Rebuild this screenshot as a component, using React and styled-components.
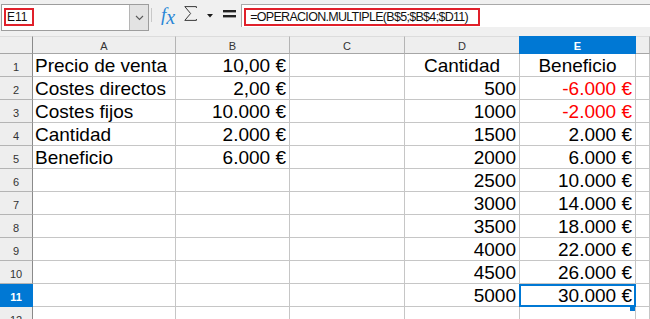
import React from "react";
import styled, { createGlobalStyle } from "styled-components";

const Global = createGlobalStyle`
  html, body { margin: 0; padding: 0; background: #ffffff; }
  body { width: 650px; height: 319px; overflow: hidden; font-family: "Liberation Sans", Arial, sans-serif; }
`;

const Window = styled.div`
  width: 650px;
  height: 319px;
  overflow: hidden;
  display: flex;
  flex-direction: column;
  background: #ffffff;
`;

const Toolbar = styled.div`
  height: 36px;
  flex: none;
  display: flex;
  align-items: flex-start;
  padding-top: 4px;
  box-sizing: border-box;
  background: #f0f0f0;
`;

const NameBox = styled.div`
  margin-left: 1px;
  width: 148px;
  height: 27px;
  box-sizing: border-box;
  border: 1px solid #9d9d9d;
  background: #ffffff;
  display: flex;
`;

const NameField = styled.div`
  flex: 1;
  padding: 2px 0 0 2px;
`;

const Highlight = styled.span`
  display: inline-block;
  height: 18px;
  box-sizing: border-box;
  border: 2px solid #e0202a;
  padding: ${(p) => p.$pad};
  font-family: "Liberation Sans", Arial, sans-serif;
  font-size: ${(p) => p.$size || "12px"};
  line-height: 14px;
  letter-spacing: ${(p) => p.$ls || "0"};
  color: #111111;
  white-space: nowrap;
`;

const DropButton = styled.div`
  width: 18px;
  background: #e3e3e3;
  border-left: 1px solid #b5b5b5;
  display: flex;
  align-items: center;
  justify-content: center;
`;

const Separator = styled.div`
  width: 1px;
  height: 14px;
  margin: 4px 0 0 2px;
  background: #c8c8c8;
`;

const Fx = styled.div`
  margin: 0 0 0 9px;
  height: 24px;
  font-family: "Liberation Serif", "Times New Roman", serif;
  font-style: italic;
  font-size: 19px;
  line-height: 20px;
  color: #2a86d6;
  white-space: nowrap;
`;

const FxSub = styled.span`
  font-size: 20px;
  position: relative;
  top: 3px;
`;

const IconSlot = styled.div`
  margin: ${(p) => p.$top}px 0 0 ${(p) => p.$left}px;
  display: flex;
`;

const FormulaField = styled.div`
  margin-left: 5px;
  flex: 1;
  height: 23px;
  box-sizing: border-box;
  border-top: 1px solid #a9a9a9;
  border-left: 1px solid #a9a9a9;
  background: #ffffff;
  padding: 2px 0 0 2px;
`;

const Sheet = styled.div`
  flex: 1;
  overflow: hidden;
  display: grid;
  grid-template-columns: 33px 143px 114px 115px 115px 116px 1fr;
  grid-template-rows: 18px repeat(12, 23px);
`;

const Corner = styled.div`
  background: #eeeeee;
  border-right: 1px solid #8a8a8a;
  border-bottom: 1px solid #a6a6a6;
  border-top: 1px solid #dcdcdc;
  box-sizing: border-box;
`;

const ColHead = styled.div`
  box-sizing: border-box;
  border-top: 1px solid ${(p) => (p.$active ? "#0078d4" : "#dcdcdc")};
  border-right: 1px solid ${(p) => (p.$active ? "#0078d4" : "#b4b4b4")};
  border-bottom: 1px solid ${(p) => (p.$active ? "#0078d4" : "#a6a6a6")};
  box-shadow: ${(p) => (p.$active ? "-1px 0 0 #0078d4" : "none")};
  background: ${(p) => (p.$active ? "#0078d4" : "#eeeeee")};
  color: ${(p) => (p.$active ? "#ffffff" : "#333333")};
  font-weight: ${(p) => (p.$active ? 700 : 400)};
  font-family: "Liberation Sans", Arial, sans-serif;
  font-size: 11px;
  line-height: 16px;
  padding-top: 1px;
  text-align: center;
`;

const RowHead = styled.div`
  box-sizing: border-box;
  border-right: 1px solid ${(p) => (p.$active ? "#0078d4" : "#8a8a8a")};
  border-bottom: 1px solid ${(p) => (p.$active ? "#0078d4" : "#b4b4b4")};
  background: ${(p) => (p.$active ? "#0078d4" : "#eeeeee")};
  color: ${(p) => (p.$active ? "#ffffff" : "#333333")};
  font-weight: ${(p) => (p.$active ? 700 : 400)};
  font-family: "Liberation Sans", Arial, sans-serif;
  font-size: 11px;
  line-height: 22px;
  padding-top: 2px;
  text-align: center;
`;

const Cell = styled.div`
  position: relative;
  box-sizing: border-box;
  border-right: 1px solid #c6c6c6;
  border-bottom: 1px solid #c6c6c6;
  padding: 1px ${(p) => (p.$align === "right" ? "3px" : "2px")} 0 2px;
  font-family: "Liberation Sans", Arial, sans-serif;
  font-size: 19px;
  line-height: 22px;
  white-space: nowrap;
  text-align: ${(p) => p.$align || "left"};
  color: ${(p) => (p.$red ? "#ff0000" : "#000000")};
`;

const Cursor = styled.div`
  position: absolute;
  left: -1px;
  right: -1px;
  top: 0;
  bottom: -1px;
  border: 2px solid #0078d4;
  pointer-events: none;
`;

const Handle = styled.div`
  position: absolute;
  right: -2px;
  bottom: -6px;
  width: 6px;
  height: 6px;
  background: #0078d4;
`;

const cols = ["A", "B", "C", "D", "E", ""];

const rows = [
  ["Precio de venta", "10,00 €", "", { t: "Cantidad", a: "center" }, { t: "Beneficio", a: "center" }],
  ["Costes directos", "2,00 €", "", "500", { t: "-6.000 €", red: true }],
  ["Costes fijos", "10.000 €", "", "1000", { t: "-2.000 €", red: true }],
  ["Cantidad", "2.000 €", "", "1500", "2.000 €"],
  ["Beneficio", "6.000 €", "", "2000", "6.000 €"],
  ["", "", "", "2500", "10.000 €"],
  ["", "", "", "3000", "14.000 €"],
  ["", "", "", "3500", "18.000 €"],
  ["", "", "", "4000", "22.000 €"],
  ["", "", "", "4500", "26.000 €"],
  ["", "", "", "5000", "30.000 €"],
  ["", "", "", "", ""],
];

function cellProps(v, colIndex) {
  if (v && typeof v === "object") return { text: v.t, align: v.a || "right", red: v.red };
  return { text: v, align: colIndex === 0 ? "left" : "right", red: false };
}

export default function App() {
  return (
    <>
      <Global />
      <Window>
        <Toolbar>
          <NameBox>
            <NameField>
              <Highlight $pad="0 5px 0 1px">E11</Highlight>
            </NameField>
            <DropButton>
              <svg width="9" height="6" viewBox="0 0 9 6">
                <path d="M1 1 L4.5 4.5 L8 1" fill="none" stroke="#5a5a5a" strokeWidth="1.1" />
              </svg>
            </DropButton>
          </NameBox>
          <Separator />
          <Fx>
            f<FxSub>x</FxSub>
          </Fx>
          <IconSlot $top={2} $left={9}>
            <svg width="13" height="15" viewBox="0 0 13 15">
              <path d="M12.4 2 V0.6 H0.8 L6.6 7.5 L0.8 14.4 H12.4 V13" fill="none" stroke="#3a3a3a" strokeWidth="1" />
            </svg>
          </IconSlot>
          <IconSlot $top={10} $left={10}>
            <svg width="6" height="4" viewBox="0 0 6 4">
              <path d="M0 0 H6 L3 3.5 Z" fill="#1a1a1a" />
            </svg>
          </IconSlot>
          <IconSlot $top={6} $left={10}>
            <svg width="13" height="8" viewBox="0 0 13 8">
              <rect x="0" y="0" width="13" height="2.4" fill="#222222" />
              <rect x="0" y="5" width="13" height="2.4" fill="#222222" />
            </svg>
          </IconSlot>
          <FormulaField>
            <Highlight $pad="0 10px 0 4px" $size="12.5px" $ls="-0.7px">
              =OPERACION.MULTIPLE(B$5;$B$4;$D11)
            </Highlight>
          </FormulaField>
        </Toolbar>
        <Sheet>
          <Corner />
          {cols.map((c, i) => (
            <ColHead key={i} $active={c === "E"}>
              {c}
            </ColHead>
          ))}
          {rows.map((r, ri) => (
            <React.Fragment key={ri}>
              <RowHead $active={ri === 10}>{ri + 1}</RowHead>
              {r.map((v, ci) => {
                const p = cellProps(v, ci);
                return (
                  <Cell key={ci} $align={p.align} $red={p.red}>
                    {p.text}
                    {ri === 10 && ci === 4 && (
                      <Cursor>
                        <Handle />
                      </Cursor>
                    )}
                  </Cell>
                );
              })}
              <Cell />
            </React.Fragment>
          ))}
        </Sheet>
      </Window>
    </>
  );
}
